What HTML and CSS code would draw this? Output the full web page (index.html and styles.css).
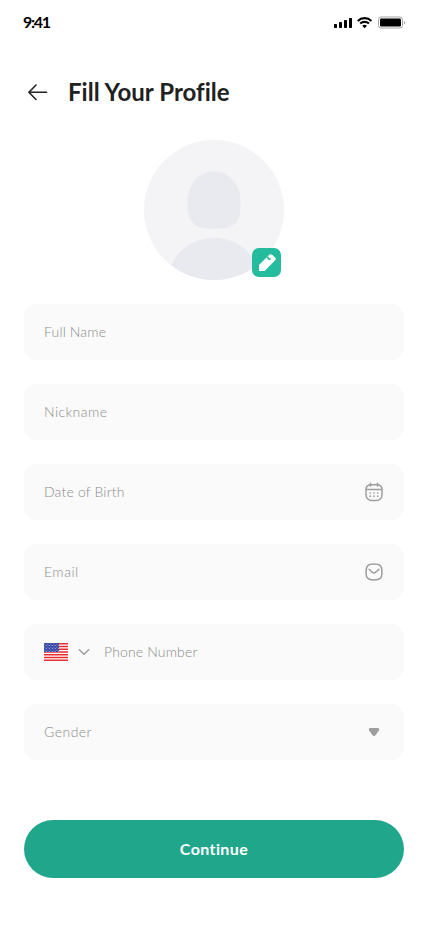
FILE: index.html
```html
<!DOCTYPE html>
<html lang="en">
<head>
<meta charset="utf-8">
<meta name="viewport" content="width=device-width, initial-scale=1">
<title>Fill Your Profile</title>
<link rel="stylesheet" href="styles.css">
</head>
<body>
<main class="screen">
  <div class="status">
    <span class="time">9:41</span>
    <svg class="indicators" width="72" height="14" viewBox="0 0 72 14">
      <g fill="#000">
        <rect x="0" y="8" width="3" height="4" rx=".7"/>
        <rect x="5" y="6" width="3" height="6" rx=".7"/>
        <rect x="10" y="4" width="3" height="8" rx=".7"/>
        <rect x="15" y="2" width="3" height="10" rx=".7"/>
        <path d="M28.200 9.800a3.600 3.600 0 0 1 4.800 0l-2.400 2.500z"/>
      </g>
      <g fill="none" stroke="#000" stroke-width="2.100">
        <path d="M23.800 4.900a9.800 9.800 0 0 1 13.600 0"/>
        <path d="M26.200 7.600a6.400 6.400 0 0 1 8.800 0"/>
      </g>
      <rect x="44.500" y="1" width="24" height="11" rx="2.600" fill="none" stroke="#a3a3a3"/>
      <rect x="46" y="2.500" width="21" height="8" rx="1.300"/>
      <path d="M70 5v3.500q1.200-.5 1.200-1.750T70 5z" fill="#a3a3a3"/>
    </svg>
  </div>
  <header class="header">
    <svg class="back" width="20" height="18" viewBox="0 0 20 18">
      <path d="M18.600 9.300H1.200M8 2 .9 9.300 8 16.500" fill="none" stroke="#212121" stroke-width="1.600" stroke-linecap="round" stroke-linejoin="round"/>
    </svg>
    <h1 class="title">Fill Your Profile</h1>
  </header>
  <div class="avatar">
    <svg width="140" height="140" viewBox="0 0 140 140">
      <defs><clipPath id="disc"><circle cx="70" cy="70" r="70"/></clipPath></defs>
      <circle cx="70" cy="70" r="70" fill="#f4f4f7"/>
      <path d="M70 31.500C86 31.500 96.500 45 96.500 62V67C96.500 82 88 88.500 76 88.500H64C52 88.500 43.500 82 43.500 67V62C43.500 45 54 31.500 70 31.500Z" fill="#e9eaef"/>
      <circle cx="70" cy="145" r="47.300" fill="#e9eaef" clip-path="url(#disc)"/>
    </svg>
    <button class="edit" aria-label="Edit photo">
      <svg width="29" height="29" viewBox="0 0 29 29">
        <path d="M7 23.100v-6L17.300 6.700Q18.900 5.500 20.500 6.900L23 9.400Q24.400 10.800 23.200 12.300L12.600 23.100z" fill="#fff"/>
        <path d="M15.600 8.600Q16 11.500 18.700 11.300" fill="none" stroke="#24bc9d" stroke-width="1.500"/>
      </svg>
    </button>
  </div>
  <form class="fields">
    <div class="field"><span class="label full">Full Name</span></div>
    <div class="field"><span class="label nick">Nickname</span></div>
    <div class="field">
      <span class="label birth">Date of Birth</span>
      <svg class="icon" width="20" height="20" viewBox="0 0 20 20" fill="none" stroke="#9e9e9e" stroke-width="1.500" stroke-linecap="round">
        <path d="M7 2.700h6Q18 2.700 18 7.500v4.500Q18 18.500 12 18.500H8Q2 18.500 2 12V7.500Q2 2.700 7 2.700zM2.300 7.400h15.400M6.500 1.300v2.800M13.500 1.300v2.800"/>
        <path d="M6.300 11h.01M10 11h.01M13.700 11h.01M6.300 14.200h.01M10 14.200h.01M13.700 14.200h.01" stroke-width="1.700"/>
      </svg>
    </div>
    <div class="field">
      <span class="label email">Email</span>
      <svg class="icon" width="20" height="20" viewBox="0 0 20 20" fill="none" stroke="#9e9e9e" stroke-width="1.500" stroke-linecap="round">
        <path d="M10 2C16.200 2 18 3.800 18 10S16.200 18 10 18 2 16.200 2 10 3.800 2 10 2z"/>
        <path d="M5.200 7.400 8.300 10.200Q10 11.600 11.700 10.200L14.800 7.400"/>
      </svg>
    </div>
    <div class="field">
      <svg class="flag" width="24" height="18" viewBox="0 0 24 18">
        <defs><pattern id="stars" width="3" height="3" patternUnits="userSpaceOnUse"><rect width="3" height="3" fill="#3548a4"/><path d="M.3.7h1v.9h-1zM1.800 2.100h1V3h-1z" fill="#a9b4e5"/></pattern></defs>
        <path d="M0 0h24v18H0z" fill="#fff"/>
        <path d="M0 .7h24M0 3.470h24M0 6.240h24M0 9.010h24M0 11.780h24M0 14.550h24M0 17.320h24" stroke="#e72d34" stroke-width="1.600"/>
        <path d="M0 0h15v9H0z" fill="url(#stars)"/>
      </svg>
      <svg class="chevron" width="12" height="8" viewBox="0 0 12 8"><path d="M1.300 1.700 6 6.300l4.700-4.600" fill="none" stroke="#9e9e9e" stroke-width="1.500" stroke-linecap="round" stroke-linejoin="round"/></svg>
      <span class="label phone">Phone Number</span>
    </div>
    <div class="field">
      <span class="label gender">Gender</span>
      <svg class="icon" width="20" height="20" viewBox="0 0 20 20"><path d="M6.500 6h7Q15.800 6 15 8.200L11.700 13Q10 15 8.300 13L5 8.200Q4.200 6 6.500 6z" fill="#9e9e9e"/></svg>
    </div>
  </form>
  <button class="continue"><span class="cta">Continue</span></button>
</main>
</body>
</html>
```
FILE: styles.css
```css
* { box-sizing: border-box; }
body { margin: 0; background: #fff; font-family: Lato, "Liberation Sans", sans-serif; font-variant-ligatures: none; }
button { border: 0; padding: 0; font-family: inherit; }
svg { display: block; flex: none; }
.screen { width: 428px; height: 926px; padding: 0 24px; overflow: hidden; }
.status { height: 44px; margin: 0 -2px 0 -1px; display: flex; align-items: center; justify-content: space-between; }
.time { font-size: 16px; line-height: 20px; font-weight: 700; letter-spacing: -1.3px; color: #000; }
.indicators { width: 72px; margin-top: 2px; }
.header { height: 48px; margin-top: 24px; padding-left: 4px; display: flex; align-items: center; gap: 20px; }
.title { margin: 0; font-size: 24px; line-height: 30px; font-weight: 700; letter-spacing: 0.03px; color: #212121; white-space: nowrap; }
.avatar { position: relative; width: 140px; height: 140px; margin: 24px auto 0; }
.edit { position: absolute; left: 108px; top: 108px; width: 29px; height: 29px; border-radius: 7px; background: #24bc9d; }
.fields { margin-top: 24px; display: grid; gap: 24px; }
.field { height: 56px; padding: 0 20px; border-radius: 12px; background: #fafafa; display: flex; align-items: center; }
.label { font-size: 14px; line-height: 20px; font-weight: 300; letter-spacing: 0.3px; color: #8c8c8c; white-space: nowrap; }
.full { letter-spacing: 0.17px; }
.nick { letter-spacing: 0.44px; }
.birth { letter-spacing: 0.18px; }
.email { letter-spacing: 0.5px; }
.phone { letter-spacing: 0.15px; }
.gender { letter-spacing: 0.48px; }
.icon { margin-left: auto; }
.chevron { margin: 0 14px 0 10px; }
.continue { display: flex; align-items: center; justify-content: center; width: 100%; height: 58px; margin-top: 60px; border-radius: 29px; background: #20a68b; color: #fff; }
.cta { font-size: 16px; line-height: 22px; font-weight: 700; letter-spacing: 0.4px; }
```
